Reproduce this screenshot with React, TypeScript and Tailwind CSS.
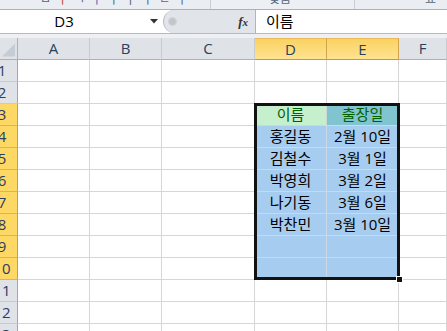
import React from 'react';

const ROWS: { n: number; d?: string; e?: string }[] = [
  { n: 1 },
  { n: 2 },
  { n: 3, d: '이름', e: '출장일' },
  { n: 4, d: '홍길동', e: '2월 10일' },
  { n: 5, d: '김철수', e: '3월 1일' },
  { n: 6, d: '박영희', e: '3월 2일' },
  { n: 7, d: '나기동', e: '3월 6일' },
  { n: 8, d: '박찬민', e: '3월 10일' },
  { n: 9, d: '', e: '' },
  { n: 10, d: '', e: '' },
  { n: 11 },
  { n: 12 },
  { n: 13 },
];

const COLS = ['A', 'B', 'C', 'D', 'E', 'F'];

function RowHeader({ n }: { n: number }) {
  const sel = n >= 3 && n <= 10;
  return (
    <div
      className={`h-[22px] w-[18px] overflow-hidden border-b border-r ${
        sel ? 'bg-[#fdd865] border-b-[#e2b157] border-r-[#d39a3c]' : 'bg-[#dfe3e8] border-b-[#c3cad2] border-r-[#9ea8b3]'
      }`}
    >
      <div className="-ml-[14px] w-[32px] text-center leading-[21px] text-[15px] text-[#2b3d62]">{n}</div>
    </div>
  );
}

function Cell({ row, col }: { row: number; col: string }) {
  const r = ROWS[row - 1];
  const inData = (col === 'D' || col === 'E') && r.d !== undefined;
  let cls = 'bg-white border-[#d6d6d6]';
  let text = '';
  if (inData) {
    text = col === 'D' ? r.d! : r.e!;
    if (row === 3 && col === 'D') cls = 'bg-[#c6efce] border-[#cfd9d3] text-[#006100]';
    else if (row === 3 && col === 'E') cls = 'bg-[#80c4cf] border-[#cdd9e5] text-[#006100]';
    else cls = 'bg-[#a6cdf0] border-[#cbd8e6] text-black';
  }
  return (
    <div className={`h-[22px] border-b border-r text-center leading-[21px] text-[15px] whitespace-nowrap overflow-hidden ${cls}`}>
      {text}
    </div>
  );
}

export default function App() {
  return (
    <div className="w-[447px] h-[331px] overflow-hidden bg-white font-['Open_Sans','Noto_Sans_CJK_KR',sans-serif] select-none">
      {/* ribbon bottom edge */}
      <div className="relative h-[10px] overflow-hidden bg-[#eaeef2] border-b border-[#a9b1ba]">
        <div className="flex h-full">
          <div className="w-[211px] overflow-hidden border-r border-[#c9d0d8]">
            <div className="-mt-[9px] ml-[40px] flex gap-[6px] text-[12px] text-[#566479]">
              <span>ㅁ</span><span className="text-[#b5483a]">ㅣ</span><span>ㄱ</span><span className="text-[#3c6dbb]">ㅣ</span>
              <span>ㅣ</span><span>ㅏ</span><span>ㅣ</span><span className="text-[#b5483a]">ㄹ</span><span>ㅣ</span>
            </div>
          </div>
          <div className="w-[144px] overflow-hidden border-r border-[#c9d0d8] bg-[#eceff3]">
            <div className="-mt-[10px] pl-[58px] text-[12px] text-[#566479]">맞춤</div>
          </div>
          <div className="flex-1 overflow-hidden">
            <div className="-mt-[10px] pl-[70px] text-[12px] text-[#566479]">표시 형식</div>
          </div>
        </div>
      </div>

      {/* formula bar */}
      <div className="flex h-[24px] items-stretch bg-white border-b border-[#b3bac3]">
        <div className="w-[128px] text-center leading-[23px] text-[15px] text-black">D3</div>
        <div className="w-[35px] flex items-center">
          <svg width="8" height="5" viewBox="0 0 8 5" className="ml-[22px]">
            <path d="M0 0 L8 0 L4 4.5 Z" fill="#333" />
          </svg>
        </div>
        <div className="flex w-[92px] items-center rounded-l-full bg-[#e1e4e9] border-l border-[#b4bbc4]">
          <div className="ml-[4px] h-[9px] w-[9px] rounded-full bg-[#c2c6cc] border border-[#d3d6db]" />
          <div className="ml-auto mr-[7px] font-['Liberation_Serif',serif] italic font-bold text-[13px] leading-none text-[#333]">
            f<span className="text-[11px]">x</span>
          </div>
        </div>
        <div className="flex-1 border-l border-[#aeb5be] pl-[10px] leading-[23px] text-[15px] text-black">이름</div>
      </div>

      <div className="h-[4px] bg-[#eef0f3]" />

      {/* sheet */}
      <div className="relative">
        <div className="grid grid-cols-[18px_72px_72px_93px_72px_72px_1fr]">
          {/* corner */}
          <div className="relative h-[22px] bg-[#dfe3e8] border-b border-r border-b-[#a9b2bc] border-r-[#a9b2bc]">
            <svg width="18" height="22" className="absolute left-0 top-0">
              <path d="M2 18.5 L15 18.5 L15 5.5 Z" fill="#c5ccd4" />
            </svg>
          </div>
          {COLS.map((c) => {
            const sel = c === 'D' || c === 'E';
            return (
              <div
                key={c}
                className={`h-[22px] border-b border-r text-center leading-[21px] text-[15px] text-[#27415f] ${
                  sel
                    ? 'bg-gradient-to-b from-[#fad262] to-[#ffe38f] border-b-[#c9963c] border-r-[#d4a24a] border-t border-t-[#eab95a]'
                    : 'bg-[#dfe3e8] border-b-[#a9b2bc] border-r-[#c6ccd4]'
                }`}
              >
                {c}
              </div>
            );
          })}
          {ROWS.map((r) => (
            <React.Fragment key={r.n}>
              <RowHeader n={r.n} />
              {COLS.map((c) => (
                <Cell key={c} row={r.n} col={c} />
              ))}
            </React.Fragment>
          ))}
        </div>

        {/* selection border D3:E10 */}
        <div className="pointer-events-none absolute left-[254px] top-[65px] h-[177px] w-[146px] border-[3px] border-[#121212]" />
        <div className="pointer-events-none absolute left-[396px] top-[238px] h-[7px] w-[7px] bg-[#121212] border border-white" />
      </div>
    </div>
  );
}
